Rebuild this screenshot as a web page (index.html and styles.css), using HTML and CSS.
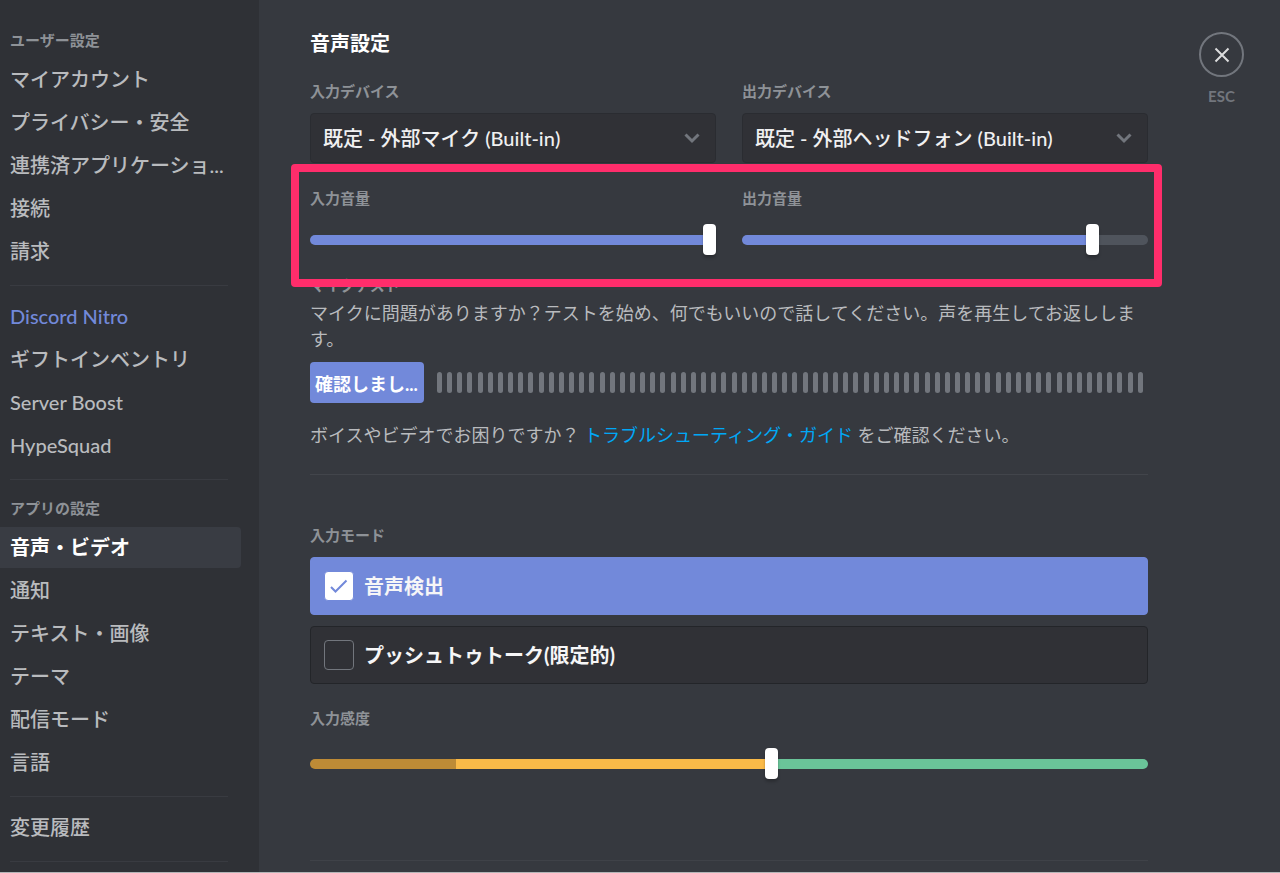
FILE: index.html
```html
<!DOCTYPE html>
<html lang="ja">
<head>
<meta charset="utf-8">
<meta name="viewport" content="width=device-width, initial-scale=1">
<title>音声・ビデオ</title>
<link rel="stylesheet" href="styles.css">
</head>
<body>
<div class="app">
  <nav class="sidebar" aria-label="設定">
    <h2 class="nav-title">ユーザー設定</h2>
    <div class="nav-group">
      <a class="nav-item" href="#">マイアカウント</a>
      <a class="nav-item" href="#">プライバシー・安全</a>
      <a class="nav-item" href="#">連携済アプリケーショ...</a>
      <a class="nav-item" href="#">接続</a>
      <a class="nav-item" href="#">請求</a>
    </div>
    <hr class="nav-divider">
    <div class="nav-group">
      <a class="nav-item nav-item-nitro" href="#">Discord Nitro</a>
      <a class="nav-item" href="#">ギフトインベントリ</a>
      <a class="nav-item" href="#">Server Boost</a>
      <a class="nav-item" href="#">HypeSquad</a>
    </div>
    <hr class="nav-divider">
    <h2 class="nav-title">アプリの設定</h2>
    <div class="nav-group">
      <a class="nav-item nav-item-selected" href="#" aria-current="page">音声・ビデオ</a>
      <a class="nav-item" href="#">通知</a>
      <a class="nav-item" href="#">テキスト・画像</a>
      <a class="nav-item" href="#">テーマ</a>
      <a class="nav-item" href="#">配信モード</a>
      <a class="nav-item" href="#">言語</a>
    </div>
    <hr class="nav-divider">
    <div class="nav-group">
      <a class="nav-item" href="#">変更履歴</a>
    </div>
    <hr class="nav-divider">
  </nav>

  <main class="content">
    <h1 class="page-title">音声設定</h1>

    <div class="columns">
      <div class="field">
        <label class="label" for="input-device">入力デバイス</label>
        <div class="select-wrap">
          <select class="select" id="input-device"><option>既定 - 外部マイク (Built-in)</option></select>
          <svg class="chevron" viewBox="0 0 18 12" aria-hidden="true"><path d="M2.5 2.5 9 9l6.500-6.500"/></svg>
        </div>
      </div>
      <div class="field">
        <label class="label" for="output-device">出力デバイス</label>
        <div class="select-wrap">
          <select class="select" id="output-device"><option>既定 - 外部ヘッドフォン (Built-in)</option></select>
          <svg class="chevron" viewBox="0 0 18 12" aria-hidden="true"><path d="M2.5 2.500 9 9l6.500-6.500"/></svg>
        </div>
      </div>
    </div>

    <div class="columns volumes">
      <div class="field">
        <label class="label" for="input-volume">入力音量</label>
        <input class="slider slider-full" id="input-volume" type="range" min="0" max="200" value="200">
      </div>
      <div class="field">
        <label class="label" for="output-volume">出力音量</label>
        <input class="slider slider-output" id="output-volume" type="range" min="0" max="200" value="175">
      </div>
      <div class="highlight"></div>
    </div>

    <section class="mic-test">
      <h2 class="label">マイクテスト</h2>
      <p class="text">マイクに問題がありますか？テストを始め、何でもいいので話してください。声を再生してお返しします。</p>
      <div class="meter-row">
        <button class="button" type="button">確認しまし...</button>
        <div class="meter"><i></i><i></i><i></i><i></i><i></i><i></i><i></i><i></i><i></i><i></i><i></i><i></i><i></i><i></i><i></i><i></i><i></i><i></i><i></i><i></i><i></i><i></i><i></i><i></i><i></i><i></i><i></i><i></i><i></i><i></i><i></i><i></i><i></i><i></i><i></i><i></i><i></i><i></i><i></i><i></i><i></i><i></i><i></i><i></i><i></i><i></i><i></i><i></i><i></i><i></i><i></i><i></i><i></i><i></i><i></i><i></i><i></i><i></i><i></i><i></i><i></i><i></i><i></i><i></i><i></i><i></i><i></i><i></i><i></i><i></i></div>
      </div>
      <p class="text help">ボイスやビデオでお困りですか？ <a class="link" href="#">トラブルシューティング・ガイド</a> をご確認ください。</p>
    </section>

    <hr class="divider">

    <section class="input-mode">
      <h2 class="label">入力モード</h2>
      <div class="options">
        <label class="option option-checked">
          <span class="check">
            <input class="check-box" type="checkbox" checked>
            <svg class="check-mark" viewBox="0 0 30 30" aria-hidden="true"><path d="m7 16 4.500 4.500L22.500 9.500"/></svg>
          </span>
          <span class="option-text">音声検出</span>
        </label>
        <label class="option">
          <span class="check"><input class="check-box" type="checkbox"></span>
          <span class="option-text">プッシュトゥトーク(限定的)</span>
        </label>
      </div>
    </section>

    <section class="sensitivity">
      <label class="label" for="sensitivity">入力感度</label>
      <input class="slider slider-sensitivity" id="sensitivity" type="range" min="0" max="1000" value="552">
    </section>

    <hr class="divider divider-end">
  </main>

  <aside class="close">
    <button class="close-button" type="button" aria-label="閉じる">
      <svg class="close-icon" viewBox="0 0 16 16" aria-hidden="true"><path d="m1.500 1.500 13 13m0-13-13 13"/></svg>
    </button>
    <span class="close-key">ESC</span>
  </aside>
</div>
</body>
</html>
```
FILE: styles.css
```css
* {
  box-sizing: border-box;
}

body {
  margin: 0;
  background: #36393f;
  color: #b9bbbe;
  font-family: Lato, "Noto Sans CJK JP", sans-serif;
  font-size: 20px;
}

h1,
h2,
p,
hr {
  margin: 0;
}

hr {
  border: 0;
  height: 1px;
}

.app {
  display: flex;
  min-height: 100vh;
  border-bottom: 1px solid #b4b5b7;
}

/* Sidebar */

.sidebar {
  flex: 0 0 259px;
  padding: 22px 18px 0 0;
  background: #2f3136;
}

.nav-title {
  padding-left: 10px;
  color: #8e9297;
  font-size: 15px;
  font-weight: 700;
  line-height: 37px;
}

.nav-group {
  display: grid;
  gap: 2px;
}

.nav-item {
  padding-left: 10px;
  border-radius: 0 4px 4px 0;
  color: #b9bbbe;
  font-weight: 500;
  line-height: 41px;
  text-decoration: none;
  white-space: nowrap;
}

.nav-item-nitro {
  color: #7289da;
}

.nav-item-selected {
  background: #393c43;
  color: #fff;
  font-weight: 700;
}

.nav-divider {
  margin: 13px 13px 10px 10px;
  background: #393b41;
}

/* Content */

.content {
  flex: 1;
  min-width: 0;
  padding: 28px 0 11px 51px;
}

.page-title {
  margin-bottom: 23px;
  color: #fff;
  font-size: 20px;
  font-weight: 700;
  line-height: 30px;
}

.columns {
  display: grid;
  grid-template-columns: 1fr 1fr;
  gap: 26px;
}

.label {
  display: block;
  color: #8e9297;
  font-size: 15px;
  font-weight: 700;
  line-height: 20px;
}

.select-wrap {
  position: relative;
  margin-top: 12px;
}

.select {
  display: block;
  width: 100%;
  height: 50px;
  padding: 0 40px 0 12px;
  border: 1px solid #2a2c31;
  border-radius: 4px;
  appearance: none;
  background: #303136;
  color: #f0f0f1;
  font: 500 20px Lato, "Noto Sans CJK JP", sans-serif;
}

.chevron {
  position: absolute;
  top: 19px;
  right: 15px;
  width: 18px;
  height: 12px;
  fill: none;
  stroke: #72767d;
  stroke-width: 3;
  pointer-events: none;
}

.volumes {
  position: relative;
  margin-top: 25px;
}

.highlight {
  position: absolute;
  inset: -24px -14px -32px -19px;
  border: 8px solid #ff2d6b;
  border-radius: 4px;
  pointer-events: none;
}

/* Sliders */

.slider {
  display: block;
  width: 100%;
  height: 31px;
  margin: 16px 0 0;
  appearance: none;
  background: none;
}

.slider::-webkit-slider-runnable-track {
  height: 10px;
  border-radius: 5px;
  background: #7289da;
}

.slider::-webkit-slider-thumb {
  width: 13px;
  height: 31px;
  margin-top: -11px;
  border-radius: 4px;
  appearance: none;
  background: #fff;
  box-shadow: 0 3px 3px rgba(0, 0, 0, 0.2), 0 0 1px rgba(0, 0, 0, 0.3);
}

.slider-output::-webkit-slider-runnable-track {
  background: linear-gradient(to right, #7289da 87%, #4f545c 87%);
}

.slider-sensitivity {
  margin-top: 20px;
}

.slider-sensitivity::-webkit-slider-runnable-track {
  background: linear-gradient(to right, #be8b36 17.4%, #faba48 17.4% 55%, #6ac499 55%);
}

/* Mic test */

.mic-test {
  margin-top: 20px;
}

.text {
  margin-top: 5px;
  font-size: 18px;
  line-height: 26px;
}

.meter-row {
  display: flex;
  align-items: center;
  gap: 13px;
  margin-top: 10px;
}

.button {
  flex: 0 0 114px;
  height: 41px;
  padding: 0 5px;
  border: 0;
  border-radius: 4px;
  background: #7289da;
  color: #fff;
  font: 700 18px Lato, "Noto Sans CJK JP", sans-serif;
  text-align: left;
  white-space: nowrap;
}

.meter {
  flex: 1;
  display: flex;
  justify-content: space-between;
  padding-right: 5px;
}

.meter i {
  width: 5px;
  height: 21px;
  border-radius: 3px;
  background: #72767d;
}

.help {
  margin-top: 19px;
}

.link {
  color: #00a8f7;
  text-decoration: none;
}

.divider {
  margin-top: 26px;
  background: #42454b;
}

/* Input mode */

.input-mode {
  margin-top: 50px;
}

.options {
  display: grid;
  gap: 11px;
  margin-top: 12px;
}

.option {
  display: flex;
  align-items: center;
  gap: 10px;
  height: 58px;
  padding: 0 13px;
  border: 1px solid #232529;
  border-radius: 4px;
  background: #303136;
  color: #f6f6f7;
  font-weight: 700;
}

.option-text {
  line-height: 30px;
}

.option-checked {
  border-color: #7289da;
  background: #7289da;
}

.check {
  display: grid;
}

.check-box,
.check-mark {
  grid-area: 1 / 1;
  width: 30px;
  height: 30px;
}

.check-box {
  margin: 0;
  border: 1px solid #72767d;
  border-radius: 4px;
  appearance: none;
}

.check-box:checked {
  border-color: #7289da;
  background: #fff;
}

.check-mark {
  fill: none;
  stroke: #7289da;
  stroke-width: 2;
  pointer-events: none;
}

.sensitivity {
  margin-top: 24px;
}

.divider-end {
  margin-top: 81px;
  background: #3f4248;
}

/* Close */

.close {
  display: flex;
  flex-direction: column;
  align-items: center;
  width: 45px;
  margin: 32px 36px 0 51px;
}

.close-button {
  display: grid;
  place-items: center;
  width: 45px;
  height: 45px;
  padding: 0;
  border: 2px solid #72767d;
  border-radius: 50%;
  background: none;
}

.close-icon {
  width: 16px;
  height: 16px;
  fill: none;
  stroke: #dcddde;
  stroke-width: 2;
}

.close-key {
  margin-top: 9px;
  color: #72767d;
  font-size: 15px;
  font-weight: 700;
  line-height: 20px;
}
```
